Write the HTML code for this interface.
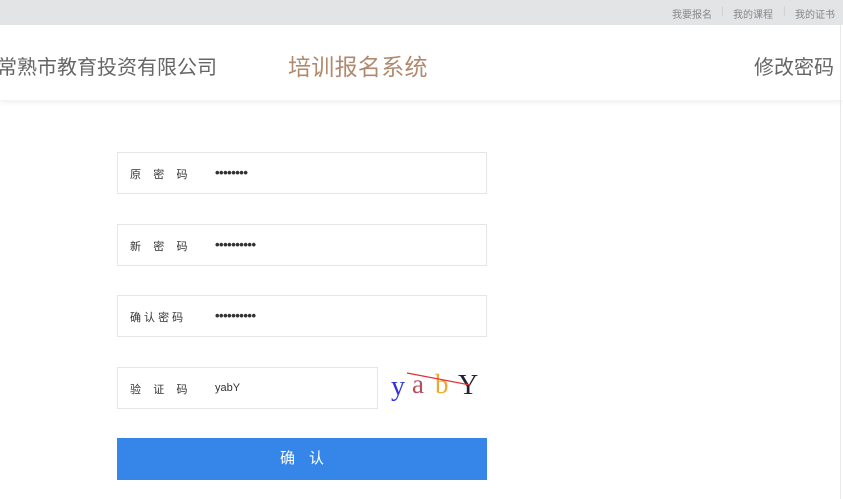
<!DOCTYPE html>
<html><head><meta charset="utf-8"><style>
body{margin:0;width:843px;height:499px;background:#fff;font-family:"Liberation Sans","Noto Sans CJK SC",sans-serif;position:relative;overflow:hidden}
.top{position:absolute;left:0;top:0;width:843px;height:25px;background:#e3e4e6;font-size:10px;color:#888}
.top span{position:absolute;top:6px}
.hd{position:absolute;left:0;top:25px;width:843px;height:75px;background:#fff;box-shadow:0 3px 5px rgba(0,0,0,.06)}
.hd div{position:absolute;top:30px;font-size:20px;line-height:26px;white-space:nowrap}
.f{position:absolute;left:117px;width:368px;height:40px;border:1px solid #e6e6e6;font-size:11px;color:#333}
.f .l{position:absolute;left:12px;top:13px;letter-spacing:0}
.f .v{position:absolute;left:97px;top:14px;font-size:11px}
.f .d{font-size:13px;top:12px;font-weight:bold;letter-spacing:-0.5px}
.btn{position:absolute;left:117px;top:438px;width:370px;height:42px;background:#3586e8;color:#fff;font-size:15px;text-align:center;line-height:42px;letter-spacing:14px;text-indent:14px}
</style></head><body>
<div class="top"><span style="left:672px">我要报名</span><span style="left:721px;color:#ccc">|</span><span style="left:733px">我的课程</span><span style="left:783px;color:#ccc">|</span><span style="left:795px">我的证书</span></div>
<div class="hd">
<div style="left:-3px;color:#666">常熟市教育投资有限公司</div>
<div style="left:288px;top:29px;color:#b08a6e;font-size:23px;letter-spacing:0.3px">培训报名系统</div>
<div style="left:754px;color:#666">修改密码</div>
</div>
<div style="position:absolute;left:840px;top:25px;width:1px;height:474px;background:#e8e8e8"></div>
<div class="f" style="top:152px"><span class="l">原&nbsp;&nbsp;&nbsp;&nbsp;密&nbsp;&nbsp;&nbsp;&nbsp;码</span><span class="v d">••••••••</span></div>
<div class="f" style="top:224px"><span class="l">新&nbsp;&nbsp;&nbsp;&nbsp;密&nbsp;&nbsp;&nbsp;&nbsp;码</span><span class="v d">••••••••••</span></div>
<div class="f" style="top:295px"><span class="l">确&nbsp;认&nbsp;密&nbsp;码</span><span class="v d">••••••••••</span></div>
<div class="f" style="top:367px;width:259px"><span class="l">验&nbsp;&nbsp;&nbsp;&nbsp;证&nbsp;&nbsp;&nbsp;&nbsp;码</span><span class="v">yabY</span></div>
<svg style="position:absolute;left:385px;top:365px" width="100" height="40">
<text x="6" y="30" font-family="Liberation Serif" font-size="28" fill="#3333dd">y</text>
<text x="27" y="28" font-family="Liberation Serif" font-size="27" fill="#b05060">a</text>
<text x="50" y="28" font-family="Liberation Serif" font-size="27" fill="#f0a830">b</text>
<text x="73" y="29" font-family="Liberation Serif" font-size="28" fill="#223">Y</text>
<line x1="22" y1="8" x2="85" y2="20" stroke="#e03030" stroke-width="1.2"/>
</svg>
<div class="btn">确认</div>
</body></html>
